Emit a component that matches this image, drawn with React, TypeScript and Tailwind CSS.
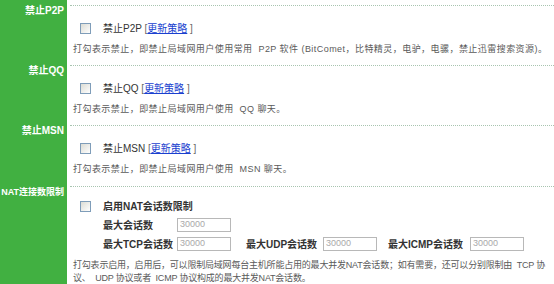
import React from "react"

const font = { fontFamily: '"Liberation Sans", "Noto Sans CJK SC", sans-serif' }

function CheckBox() {
    return (
        <span className="inline-block w-[11px] h-[11px] border border-[#7f9db9] bg-gradient-to-br from-[#dcdcd4] to-white" />
    )
}

function Label({ text, cls = "text-[10px]" }: { text: string; cls?: string }) {
    return (
        <div className={`w-[67px] shrink-0 bg-[#41b041] text-right pr-[3px] text-white font-bold leading-[12px] whitespace-nowrap ${cls}`}>
            {text}
        </div>
    )
}

function BlockSection({ label, name, desc, h }: { label: string; name: string; desc: string; h: string }) {
    return (
        <div className="flex">
            <Label text={label} />
            <div className={`flex-1 pl-[3px] ${h}`}>
                <div className="border-t border-dotted border-[#a8c4b0] h-full">
                    <div className="flex items-center h-[14px] mt-[15px] pl-[10px]">
                        <CheckBox />
                        <span className="ml-[12px] text-[10px] text-[#333] whitespace-nowrap">
                            {name} <span className="text-[#666]">[</span>
                            <a href="#" className="text-[#1a3fcf] underline">更新策略</a>
                            <span className="text-[#666]"> ]</span>
                        </span>
                    </div>
                    <div className="mt-[8px] pl-[3px] text-[9px] leading-[13px] tracking-[0.45px] text-[#5a5a5a] whitespace-pre">{desc}</div>
                </div>
            </div>
        </div>
    )
}

function NumInput() {
    return (
        <span className="inline-flex items-center w-[54px] h-[14px] border border-[#b8b8b8] bg-white pl-[2px] text-[9px] font-normal text-[#aaa]">
            30000
        </span>
    )
}

export default function App() {
    return (
        <div className="w-[554px] h-[284px] overflow-hidden bg-white" style={font}>
            {/* top spacer */}
            <div className="flex h-[5px]">
                <div className="w-[67px] bg-[#41b041]" />
            </div>

            <BlockSection
                label="禁止P2P"
                name="禁止P2P"
                h="h-[60px]"
                desc="打勾表示禁止，即禁止局域网用户使用常用  P2P 软件 (BitComet，比特精灵，电驴，电骡，禁止迅雷搜索资源)。"
            />
            <BlockSection
                label="禁止QQ"
                name="禁止QQ"
                h="h-[60px]"
                desc="打勾表示禁止，即禁止局域网用户使用  QQ 聊天。"
            />
            <BlockSection
                label="禁止MSN"
                name="禁止MSN"
                h="h-[61px]"
                desc="打勾表示禁止，即禁止局域网用户使用  MSN 聊天。"
            />

            {/* NAT */}
            <div className="flex">
                <Label text="NAT连接数限制" cls="text-[9px]" />
                <div className="flex-1 pl-[3px] h-[98px]">
                    <div className="border-t border-dotted border-[#a8c4b0] h-full">
                        <div className="flex items-center h-[14px] mt-[12px] pl-[10px]">
                            <CheckBox />
                            <span className="ml-[12px] text-[10px] font-bold text-[#333] whitespace-nowrap">启用NAT会话数限制</span>
                        </div>
                        <div className="flex items-center h-[14px] mt-[5px] pl-[33px] text-[10px] font-bold text-[#333] whitespace-nowrap">
                            <span className="w-[74px]">最大会话数</span>
                            <NumInput />
                        </div>
                        <div className="flex items-center h-[14px] mt-[5px] pl-[33px] text-[10px] font-bold text-[#333] whitespace-nowrap">
                            <span className="w-[74px]">最大TCP会话数</span>
                            <NumInput />
                            <span className="ml-[15px] w-[77px]">最大UDP会话数</span>
                            <NumInput />
                            <span className="ml-[11px] w-[82px]">最大ICMP会话数</span>
                            <NumInput />
                        </div>
                        <div className="mt-[8px] pl-[3px] text-[9px] leading-[13px] tracking-[-0.2px] text-[#5a5a5a] whitespace-pre">
                            {"打勾表示启用，启用后，可以限制局域网每台主机所能占用的最大并发NAT会话数；如有需要，还可以分别限制由  TCP 协\n议、  UDP 协议或者  ICMP 协议构成的最大并发NAT会话数。"}
                        </div>
                    </div>
                </div>
            </div>
        </div>
    )
}
